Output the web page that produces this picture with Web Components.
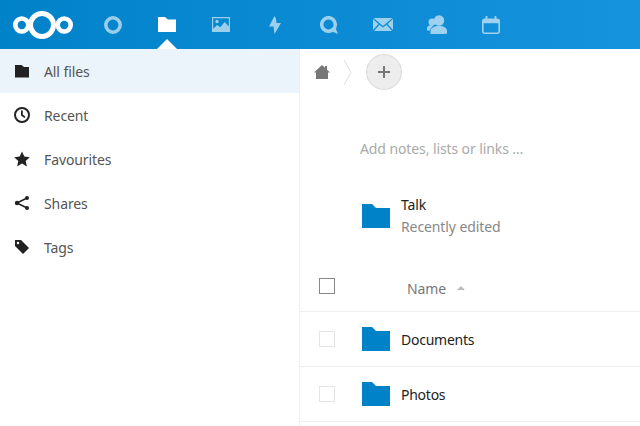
<!DOCTYPE html>
<html>
<head>
<meta charset="utf-8">
<style>
  html, body { margin: 0; height: 100%; overflow: hidden; }
  body { font-family: "Noto Sans", "Open Sans", sans-serif; font-size: 14px; letter-spacing: -.1px; color: #222; background: #fff; }
  .page { display: flex; height: 377px; }
</style>
</head>
<body>
<nc-header></nc-header>
<div class="page">
  <nc-sidebar>
    <nc-nav-item icon="folder" active>All files</nc-nav-item>
    <nc-nav-item icon="clock">Recent</nc-nav-item>
    <nc-nav-item icon="star">Favourites</nc-nav-item>
    <nc-nav-item icon="share">Shares</nc-nav-item>
    <nc-nav-item icon="tag">Tags</nc-nav-item>
  </nc-sidebar>
  <nc-content>
    <nc-breadcrumb></nc-breadcrumb>
    <nc-notes>Add notes, lists or links …</nc-notes>
    <nc-recent name="Talk" sub="Recently edited"></nc-recent>
    <nc-file-head></nc-file-head>
    <nc-file-row>Documents</nc-file-row>
    <nc-file-row>Photos</nc-file-row>
  </nc-content>
</div>
<script>
const NAV_ICONS = {
  folder: '<path d="M1 2h6.500L10 4h5v10.500H1z"/>',
  clock: '<path fill-rule="evenodd" d="M8 0a8 8 0 1 0 0 16A8 8 0 0 0 8 0zm0 2a6 6 0 1 1 0 12A6 6 0 0 1 8 2z"/><path d="M7 3.500h1.800v4.100l2.700 2.200-1.100 1.300L7 8.500z"/>',
  star: '<path d="M8 .5l2.300 5.100 5.500.6-4.100 3.700 1.200 5.500L8 12.600l-4.900 2.800 1.200-5.500L.2 6.200l5.500-.6z"/>',
  share: '<circle cx="13" cy="3" r="2"/><circle cx="13" cy="13" r="2"/><circle cx="3" cy="8" r="2.200"/><path d="M3 8l10-5M3 8l10 5" stroke="currentColor" stroke-width="1.500" fill="none"/>',
  tag: '<path fill-rule="evenodd" d="M1 1h6l8 8-6 6-8-8zm3 1.800a1.200 1.200 0 1 0 0 2.400 1.200 1.200 0 0 0 0-2.400z"/>'
};

const headerTemplate = document.createElement('template');
headerTemplate.innerHTML = `
  <style>
    :host {
      display: flex;
      height: 49px;
      background: linear-gradient(90deg, #0082c9, #1693dd);
      color: #fff;
    }
    .logo { width: 86px; display: flex; align-items: center; padding-left: 13px; box-sizing: border-box; }
    .apps { display: flex; }
    .app { width: 54px; height: 49px; position: relative; display: flex; align-items: center; justify-content: center; opacity: .6; }
    .app.active { opacity: 1; }
    .app.active::after {
      content: '';
      position: absolute;
      left: 50%;
      bottom: 0;
      margin-left: -10px;
      border: 10px solid transparent;
      border-top: 0;
      border-bottom: 10px solid #fff;
    }
    svg { display: block; }
  </style>
  <div class="logo">
    <svg width="60" height="28" viewBox="0 0 60 28" fill="none" stroke="#fff">
      <circle cx="29" cy="14" r="11.500" stroke-width="5"/>
      <circle cx="8.800" cy="14" r="6.500" stroke-width="4.600"/>
      <circle cx="51.200" cy="14" r="6.500" stroke-width="4.600"/>
    </svg>
  </div>
  <div class="apps">
    <div class="app">
      <svg width="18" height="18" viewBox="0 0 18 18" fill="none" stroke="#fff" stroke-width="3.500"><circle cx="9" cy="9" r="7.200"/></svg>
    </div>
    <div class="app active">
      <svg width="18" height="15" viewBox="0 0 18 15" fill="#fff" style="margin-bottom:1px"><path d="M0 0h7l3 2.500h8V15H0z"/></svg>
    </div>
    <div class="app">
      <svg width="18" height="15" viewBox="0 0 18 15" fill="#fff"><path fill-rule="evenodd" d="M0 0h18v15H0zm1.200 1.200v10.600l4-3.800 3 2.300 4.500-5.300 4.100 4.500V1.200zM5 2.800a1.700 1.700 0 1 1 0 3.400 1.700 1.700 0 0 1 0-3.400z"/></svg>
    </div>
    <div class="app">
      <svg width="12" height="18" viewBox="0 0 12 18" fill="#fff"><path d="M5.500 0L0 10.500h4.500L5.500 18 12 7H7.500L7 3z"/></svg>
    </div>
    <div class="app">
      <svg width="18" height="18" viewBox="0 0 18 18" fill="none" stroke="#fff" stroke-width="3.500"><circle cx="8.500" cy="8.500" r="6.800"/><path d="M12 15.500L18 18l-2.500-6z" fill="#fff" stroke="none"/></svg>
    </div>
    <div class="app">
      <svg width="20" height="13" viewBox="0 0 20 13" fill="#fff"><path d="M.5 0h19L10 8zM0 1v11l5.500-6zM20 1v11l-5.500-6zM1 13h18l-5.500-6.300L10 9.500 6.500 6.700z"/></svg>
    </div>
    <div class="app">
      <svg width="20" height="19" viewBox="0 0 20 19" fill="#fff"><circle cx="12" cy="5.500" r="5.200"/><path d="M3.500 19v-3c0-3 3.500-5 8.500-5s8 2 8 5v2.500c-3 1-13 1-16.500.5z"/><circle cx="5" cy="7" r="3.500"/><path d="M0 15.500v-2c0-2 2-3.500 5-3.500l2 .5c-2 1-3.500 2.500-4 5z"/></svg>
    </div>
    <div class="app">
      <svg width="18" height="18" viewBox="0 0 18 18" fill="none" stroke="#fff"><rect x=".8" y="3.300" width="16.400" height="13.900" rx="2" stroke-width="1.600"/><path d="M1 5.500h16" stroke-width="3.500"/><path d="M4.500 0v4M13.500 0v4" stroke-width="1.800"/></svg>
    </div>
  </div>
`;
class NcHeader extends HTMLElement {
  constructor() {
    super();
    this.attachShadow({ mode: 'open' });
    this.shadowRoot.appendChild(headerTemplate.content.cloneNode(true));
  }
}
customElements.define('nc-header', NcHeader);

const sidebarTemplate = document.createElement('template');
sidebarTemplate.innerHTML = `
  <style>
    :host { display: block; width: 299px; border-right: 1px solid #eee; flex: none; }
  </style>
  <slot></slot>
`;
class NcSidebar extends HTMLElement {
  constructor() {
    super();
    this.attachShadow({ mode: 'open' });
    this.shadowRoot.appendChild(sidebarTemplate.content.cloneNode(true));
  }
}
customElements.define('nc-sidebar', NcSidebar);

const navItemTemplate = document.createElement('template');
navItemTemplate.innerHTML = `
  <style>
    :host { display: flex; align-items: center; height: 44px; color: #555; }
    :host([active]) { background: #ebf3fb; }
    svg { width: 16px; height: 16px; margin: 0 14px; fill: #222; color: #222; flex: none; }
  </style>
  <svg viewBox="0 0 16 16"></svg>
  <slot></slot>
`;
class NcNavItem extends HTMLElement {
  constructor() {
    super();
    this.attachShadow({ mode: 'open' });
    this.shadowRoot.appendChild(navItemTemplate.content.cloneNode(true));
  }
  connectedCallback() {
    this.shadowRoot.querySelector('svg').innerHTML = NAV_ICONS[this.getAttribute('icon')];
  }
}
customElements.define('nc-nav-item', NcNavItem);

const contentTemplate = document.createElement('template');
contentTemplate.innerHTML = `
  <style>
    :host { display: block; flex: 1; min-width: 0; overflow: hidden; }
  </style>
  <slot></slot>
`;
class NcContent extends HTMLElement {
  constructor() {
    super();
    this.attachShadow({ mode: 'open' });
    this.shadowRoot.appendChild(contentTemplate.content.cloneNode(true));
  }
}
customElements.define('nc-content', NcContent);

const breadcrumbTemplate = document.createElement('template');
breadcrumbTemplate.innerHTML = `
  <style>
    :host { display: flex; align-items: center; height: 46px; padding-left: 14px; }
    svg { display: block; flex: none; }
    .sep { margin-left: 13px; }
    .add {
      width: 34px; height: 34px; margin-left: 14px; border-radius: 50%;
      background: #ededed; border: 1px solid #dbdbdb;
      display: flex; align-items: center; justify-content: center;
    }
  </style>
  <svg width="16" height="14" viewBox="0 0 16 14" fill="#777"><path d="M8 0l3 2.800V1h2v3.700L16 7.500h-2V14H2V7.500H0z"/></svg>
  <svg class="sep" width="9" height="25" viewBox="0 0 9 25" fill="none" stroke="#ddd"><path d="M1 0l7 12.500L1 25"/></svg>
  <div class="add">
    <svg width="12" height="12" viewBox="0 0 12 12" fill="#777"><path d="M5 0h2v5h5v2H7v5H5V7H0V5h5z"/></svg>
  </div>
`;
class NcBreadcrumb extends HTMLElement {
  constructor() {
    super();
    this.attachShadow({ mode: 'open' });
    this.shadowRoot.appendChild(breadcrumbTemplate.content.cloneNode(true));
  }
}
customElements.define('nc-breadcrumb', NcBreadcrumb);

const notesTemplate = document.createElement('template');
notesTemplate.innerHTML = `
  <style>
    :host { display: block; padding: 44px 0 0 60px; height: 29px; line-height: 19px; color: #aaa; }
  </style>
  <slot></slot>
`;
class NcNotes extends HTMLElement {
  constructor() {
    super();
    this.attachShadow({ mode: 'open' });
    this.shadowRoot.appendChild(notesTemplate.content.cloneNode(true));
  }
}
customElements.define('nc-notes', NcNotes);

const recentTemplate = document.createElement('template');
recentTemplate.innerHTML = `
  <style>
    :host { display: flex; align-items: center; height: 44px; padding: 26px 0 0 62px; }
    svg { display: block; flex: none; margin-right: 11px; }
    .name { color: #222; line-height: 22px; }
    .sub { color: #888; line-height: 22px; }
  </style>
  <svg width="28" height="24" viewBox="0 0 28 24" fill="#0082c9"><path d="M0 0h10l4 4h14v20H0z"/></svg>
  <div>
    <div class="name"></div>
    <div class="sub"></div>
  </div>
`;
class NcRecent extends HTMLElement {
  constructor() {
    super();
    this.attachShadow({ mode: 'open' });
    this.shadowRoot.appendChild(recentTemplate.content.cloneNode(true));
  }
  connectedCallback() {
    this.shadowRoot.querySelector('.name').textContent = this.getAttribute('name');
    this.shadowRoot.querySelector('.sub').textContent = this.getAttribute('sub');
  }
}
customElements.define('nc-recent', NcRecent);

const fileHeadTemplate = document.createElement('template');
fileHeadTemplate.innerHTML = `
  <style>
    :host { display: flex; align-items: center; height: 50px; margin-top: 23px; border-bottom: 1px solid #eee; padding-left: 19px; color: #777; }
    .check { width: 14px; height: 14px; border: 1px solid #888; flex: none; margin-right: 72px; }
    .name { margin-top: 4px; }
    .arrow { width: 0; height: 0; margin: 4px 0 0 11px; border: 4px solid transparent; border-top: 0; border-bottom: 4px solid #bbb; }
  </style>
  <div class="check"></div>
  <span class="name">Name</span>
  <span class="arrow"></span>
`;
class NcFileHead extends HTMLElement {
  constructor() {
    super();
    this.attachShadow({ mode: 'open' });
    this.shadowRoot.appendChild(fileHeadTemplate.content.cloneNode(true));
  }
}
customElements.define('nc-file-head', NcFileHead);

const fileRowTemplate = document.createElement('template');
fileRowTemplate.innerHTML = `
  <style>
    :host { display: flex; align-items: center; height: 54px; border-bottom: 1px solid #eee; padding-left: 19px; color: #222; letter-spacing: -.25px; }
    .check { width: 14px; height: 14px; border: 1px solid #e4e4e4; flex: none; margin-right: 27px; }
    svg { display: block; flex: none; margin-right: 11px; }
  </style>
  <div class="check"></div>
  <svg width="28" height="24" viewBox="0 0 28 24" fill="#0082c9"><path d="M0 0h10l4 4h14v20H0z"/></svg>
  <slot></slot>
`;
class NcFileRow extends HTMLElement {
  constructor() {
    super();
    this.attachShadow({ mode: 'open' });
    this.shadowRoot.appendChild(fileRowTemplate.content.cloneNode(true));
  }
}
customElements.define('nc-file-row', NcFileRow);
</script>
</body>
</html>
